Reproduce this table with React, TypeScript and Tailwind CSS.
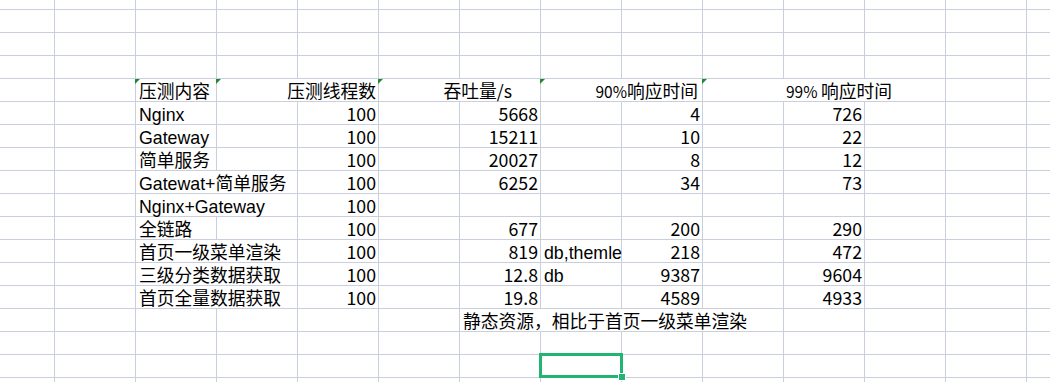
import React from "react";

type Cell = {
  span?: number;
  text?: React.ReactNode;
  align?: "l" | "r";
  open?: boolean; // text overflows into next cell, hide right gridline
  tri?: boolean; // green corner indicator
  lat?: boolean; // use Arial-like latin font
  pr?: string;
  pl?: string;
  sel?: boolean;
};

const COLS = 12;

const W: Record<number, string> = {
  1: "w-[81px]",
  2: "w-[162px]",
  3: "w-[243px]",
  4: "w-[324px]",
};

function fill(cells: Cell[]): Cell[] {
  const used = cells.reduce((a, c) => a + (c.span ?? 1), 0);
  const rest: Cell[] = [];
  for (let i = used; i < COLS; i++) rest.push({});
  return [...cells, ...rest];
}

const E: Cell = {};

const dataRow = (
  name: string,
  open: boolean,
  threads: string,
  tput: string,
  note: string,
  p90: string,
  p99: string
): Cell[] =>
  fill([
    E,
    { text: name, align: "l", open, lat: true },
    E,
    { text: threads, align: "r" },
    E,
    { text: tput, align: "r" },
    { text: note, align: "l", lat: true },
    { text: p90, align: "r" },
    E,
    { text: p99, align: "r" },
  ]);

const rows: Cell[][] = [
  fill([]),
  fill([]),
  fill([]),
  fill([
    E,
    { text: "压测内容", align: "l", tri: true },
    { text: "压测线程数", align: "r", span: 2, tri: true },
    { text: "吞吐量/s", align: "r", span: 2, tri: true, pr: "pr-[28px]" },
    {
      text: (
        <>
          <span className="text-[15.5px]">90%</span>响应时间
        </>
      ),
      align: "r",
      span: 2,
      tri: true,
      pr: "pr-[4px]",
    },
    {
      text: (
        <>
          <span className="text-[15.5px]">99% </span>响应时间
        </>
      ),
      align: "l",
      span: 3,
      tri: true,
      pl: "pl-[83px]",
    },
  ]),
  dataRow("Nginx", false, "100", "5668", "", "4", "726"),
  dataRow("Gateway", false, "100", "15211", "", "10", "22"),
  dataRow("简单服务", false, "100", "20027", "", "8", "12"),
  dataRow("Gatewat+简单服务", true, "100", "6252", "", "34", "73"),
  dataRow("Nginx+Gateway", true, "100", "", "", "", ""),
  dataRow("全链路", false, "100", "677", "", "200", "290"),
  dataRow("首页一级菜单渲染", true, "100", "819", "db,themle", "218", "472"),
  dataRow("三级分类数据获取", true, "100", "12.8", "db", "9387", "9604"),
  dataRow("首页全量数据获取", true, "100", "19.8", "", "4589", "4933"),
  fill([
    E,
    E,
    E,
    E,
    E,
    { text: "静态资源，相比于首页一级菜单渲染", align: "l", span: 4 },
  ]),
  fill([]),
  fill([E, E, E, E, E, E, { sel: true }]),
];

function CellView({ c }: { c: Cell }) {
  const span = c.span ?? 1;
  const border = c.open ? "" : "border-r border-[#c9cfdc]";
  return (
    <div
      className={`relative ${W[span]} shrink-0 h-full ${border} flex ${
        c.align === "r" ? "justify-end" : "justify-start"
      } ${c.align === "r" ? c.pr ?? "pr-[2px]" : c.pl ?? "pl-[3px]"} ${
        c.open ? "pr-[1px]" : ""
      }`}
    >
      {c.text ? (
        <span className="relative z-10 whitespace-nowrap shrink-0">
          {c.lat ? (
            <span className="font-[family-name:Liberation_Sans,Noto_Sans_CJK_SC,sans-serif]">
              {c.text}
            </span>
          ) : (
            c.text
          )}
        </span>
      ) : null}
      {c.tri ? (
        <div className="absolute -left-[1px] top-0 w-0 h-0 border-t-[5px] border-t-[#1f8a2e] border-r-[5px] border-r-transparent z-20" />
      ) : null}
      {c.sel ? (
        <>
          <div className="absolute -left-[2px] -top-[2px] w-[84px] h-[25px] border-[3px] border-[#22b473] z-30" />
          <div className="absolute left-[77px] top-[18px] w-[8px] h-[8px] bg-white z-30 flex items-center justify-center">
            <div className="w-[6px] h-[6px] bg-[#22b473]" />
          </div>
        </>
      ) : null}
    </div>
  );
}

function Row({ cells, h }: { cells: Cell[]; h: string }) {
  return (
    <div className={`flex ${h} border-b border-[#c9cfdc]`}>
      <div className="w-[55px] shrink-0 h-full border-r border-[#c9cfdc]" />
      {cells.map((c, i) => (
        <CellView key={i} c={c} />
      ))}
      <div className="flex-1 h-full" />
    </div>
  );
}

export default function App() {
  return (
    <div className="w-[1050px] h-[382px] overflow-hidden bg-white text-black text-[17.75px] leading-[22px] font-[family-name:Noto_Sans_CJK_SC,Noto_Sans,sans-serif]">
      <Row cells={fill([])} h="h-[10px]" />
      {rows.map((r, i) => (
        <Row key={i} cells={r} h="h-[23px]" />
      ))}
      <Row cells={fill([])} h="h-[23px]" />
    </div>
  );
}
